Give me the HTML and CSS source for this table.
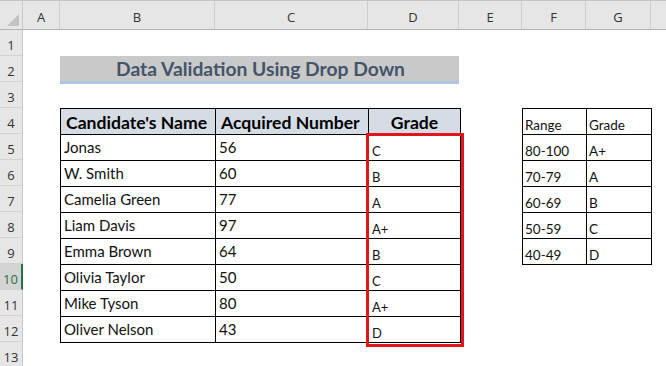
FILE: index.html
```html
<!DOCTYPE html>
<html>
<head>
<meta charset="utf-8">
<link rel="stylesheet" href="styles.css">
</head>
<body>
<div class="sheet">
  <div class="corner"><span class="tri"></span></div>
  <div class="colh">A</div>
  <div class="colh">B</div>
  <div class="colh">C</div>
  <div class="colh">D</div>
  <div class="colh">E</div>
  <div class="colh">F</div>
  <div class="colh">G</div>
  <div class="colh last"></div>

  <div class="rowh r1">1</div>
  <div class="rowh r2">2</div>
  <div class="rowh r3">3</div>
  <div class="rowh r4">4</div>
  <div class="rowh r5">5</div>
  <div class="rowh r6">6</div>
  <div class="rowh r7">7</div>
  <div class="rowh r8">8</div>
  <div class="rowh r9">9</div>
  <div class="rowh r10 active">10</div>
  <div class="rowh r11">11</div>
  <div class="rowh r12">12</div>
  <div class="rowh r13">13</div>

  <div class="title">Data Validation Using Drop Down</div>

  <table class="main">
    <colgroup><col class="cb"><col class="cc"><col class="cd"></colgroup>
    <thead>
      <tr><th>Candidate's Name</th><th>Acquired Number</th><th class="ctr">Grade</th></tr>
    </thead>
    <tbody>
      <tr><td>Jonas</td><td>56</td><td class="g">C</td></tr>
      <tr><td>W. Smith</td><td>60</td><td class="g">B</td></tr>
      <tr><td>Camelia Green</td><td>77</td><td class="g">A</td></tr>
      <tr><td>Liam Davis</td><td>97</td><td class="g">A+</td></tr>
      <tr><td>Emma Brown</td><td>64</td><td class="g">B</td></tr>
      <tr><td>Olivia Taylor</td><td>50</td><td class="g">C</td></tr>
      <tr><td>Mike Tyson</td><td>80</td><td class="g">A+</td></tr>
      <tr><td>Oliver Nelson</td><td>43</td><td class="g">D</td></tr>
    </tbody>
  </table>

  <table class="small">
    <colgroup><col class="cf"><col class="cg"></colgroup>
    <tbody>
      <tr><td>Range</td><td>Grade</td></tr>
      <tr><td>80-100</td><td>A+</td></tr>
      <tr><td>70-79</td><td>A</td></tr>
      <tr><td>60-69</td><td>B</td></tr>
      <tr><td>50-59</td><td>C</td></tr>
      <tr><td>40-49</td><td>D</td></tr>
    </tbody>
  </table>

  <div class="redbox"></div>
</div>
</body>
</html>
```

FILE: styles.css
```css
html, body {
  margin: 0;
  padding: 0;
  background: #ffffff;
}

body {
  width: 666px;
  height: 366px;
  overflow: hidden;
  font-family: Lato, "Open Sans", sans-serif;
}

.sheet {
  position: relative;
  display: grid;
  grid-template-columns: 23px 37px 155px 153px 91px 63px 64px 65px 15px;
  grid-template-rows: 30px repeat(13, 26px);
  background: #ffffff;
}

.corner {
  grid-column: 1;
  grid-row: 1;
  background: #e6e6e6;
  border-top: 1px solid #c4c4c4;
  border-right: 1px solid #c8c8c8;
  border-bottom: 1px solid #b4b4b4;
  box-sizing: border-box;
  position: relative;
}

.tri {
  position: absolute;
  right: 3px;
  bottom: 3px;
  width: 0;
  height: 0;
  border-left: 12px solid transparent;
  border-bottom: 12px solid #c2c2c2;
}

.colh {
  grid-row: 1;
  background: #e6e6e6;
  border-top: 1px solid #c4c4c4;
  border-right: 1px solid #cdcdcd;
  border-bottom: 1px solid #b4b4b4;
  box-sizing: border-box;
  display: flex;
  align-items: center;
  justify-content: center;
  padding-top: 3px;
  font-family: "Open Sans", Lato, sans-serif;
  font-size: 13px;
  color: #333333;
}

.colh.last {
  border-right: none;
}

.rowh {
  grid-column: 1;
  background: #e6e6e6;
  border-right: 1px solid #c8c8c8;
  border-bottom: 1px solid #d2d2d2;
  box-sizing: border-box;
  display: flex;
  align-items: center;
  justify-content: center;
  padding-top: 4px;
  font-family: "Open Sans", Lato, sans-serif;
  font-size: 13px;
  color: #333333;
}

.rowh.active {
  background: #d4d4d4;
  border-right: 2px solid #217346;
  color: #217346;
}

.r1 { grid-row: 2; }
.r2 { grid-row: 3; }
.r3 { grid-row: 4; }
.r4 { grid-row: 5; }
.r5 { grid-row: 6; }
.r6 { grid-row: 7; }
.r7 { grid-row: 8; }
.r8 { grid-row: 9; }
.r9 { grid-row: 10; }
.r10 { grid-row: 11; }
.r11 { grid-row: 12; }
.r12 { grid-row: 13; }
.r13 { grid-row: 14; }

.title {
  grid-column: 3 / 6;
  grid-row: 3;
  height: 25px;
  background: #c9c9c9;
  border-bottom: 3px solid #a9c6e4;
  box-sizing: content-box;
  display: flex;
  align-items: center;
  justify-content: center;
  padding-left: 2px;
  font-family: Lato, sans-serif;
  font-weight: bold;
  font-size: 19.3px;
  color: #44546a;
}

table {
  border-collapse: collapse;
  table-layout: fixed;
}

.main {
  grid-column: 3 / 6;
  grid-row: 5 / 14;
  align-self: start;
  width: 400px;
}

.cb { width: 155px; }
.cc { width: 153px; }
.cd { width: 92px; }

.main th,
.main td {
  border: 1px solid #000000;
  height: 26px;
  padding: 0 0 0 3px;
  box-sizing: border-box;
  text-align: left;
  white-space: nowrap;
  overflow: hidden;
}

.main th {
  background: #d6dce4;
  font-weight: bold;
  font-size: 17.6px;
  color: #000000;
  padding-left: 5px;
  padding-top: 2px;
}

.main th.ctr {
  text-align: center;
  padding-left: 0;
}

.main td {
  font-size: 15px;
  color: #111111;
  vertical-align: middle;
  padding-bottom: 1px;
}

.main td.g {
  font-size: 13px;
  vertical-align: bottom;
  padding-bottom: 1px;
}

.small {
  grid-column: 7 / 9;
  grid-row: 5 / 12;
  align-self: start;
  width: 129px;
}

.cf { width: 64px; }
.cg { width: 65px; }

.small td {
  border: 1px solid #000000;
  height: 26px;
  padding: 0 0 1px 2px;
  box-sizing: border-box;
  font-size: 13.5px;
  color: #111111;
  vertical-align: bottom;
  white-space: nowrap;
}

.redbox {
  position: absolute;
  left: 366px;
  top: 133px;
  width: 92px;
  height: 208px;
  border: 3px solid #e0161c;
  pointer-events: none;
}
```
